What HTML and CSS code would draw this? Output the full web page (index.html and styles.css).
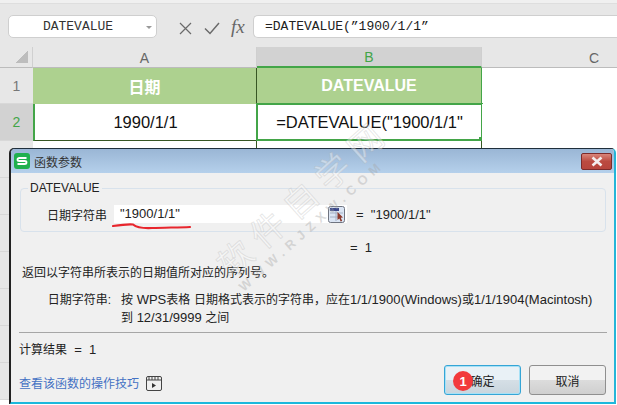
FILE: index.html
```html
<!DOCTYPE html>
<html lang="zh">
<head>
<meta charset="utf-8">
<title>DATEVALUE</title>
<link rel="stylesheet" href="styles.css">
</head>
<body>
<div class="app">
  <div class="formula-row">
    <div class="namebox"><span class="namebox-text">DATEVALUE</span><span class="caret"></span></div>
    <div class="fx-tools">
      <svg width="13" height="13" viewBox="0 0 13 13"><path d="M1 1 L12 12 M12 1 L1 12" stroke="#6a6a6a" stroke-width="1.2" fill="none"/></svg>
      <svg width="16" height="13" viewBox="0 0 16 13"><path d="M1 6.5 L6 11.5 L15 1" stroke="#6a6a6a" stroke-width="1.5" fill="none"/></svg>
      <span class="fx">fx</span>
    </div>
    <div class="formula-input">=DATEVALUE(”1900/1/1”</div>
  </div>
  <div class="sheet">
    <div class="corner"><span class="corner-mark"></span></div>
    <div class="col-head">A</div>
    <div class="col-head active">B</div>
    <div class="col-head col-c">C</div>

    <div class="row-head">1</div>
    <div class="cell title">日期</div>
    <div class="cell title title-b">DATEVALUE</div>
    <div class="cell blank"></div>

    <div class="row-head active">2</div>
    <div class="cell body">1990/1/1</div>
    <div class="cell body selected">=DATEVALUE("1900/1/1"<span class="handle"></span></div>
    <div class="cell blank"></div>

    <div class="row-head"></div>
    <div class="cell body"></div>
    <div class="cell body"></div>
    <div class="cell blank"></div>

    <div class="row-head"></div>
    <div class="row-head"></div>
    <div class="row-head"></div>
    <div class="row-head"></div>
    <div class="row-head"></div>
    <div class="row-head"></div>
  </div>
</div>

<div class="dialog">
  <div class="titlebar">
    <svg class="logo" width="16" height="16" viewBox="0 0 16 16"><rect width="16" height="16" rx="3" fill="#20b04e"/><path d="M12.5 5 H5.5 Q3.5 5 3.5 6.7 Q3.5 8 5.5 8 H10.5 Q12.5 8 12.5 9.4 Q12.5 11 10.5 11 H3.5" stroke="#fff" stroke-width="1.8" fill="none"/></svg>
    <span class="title-text">函数参数</span>
    <span class="close"><svg width="16" height="11" viewBox="0 0 16 11"><path d="M3.5 1.5 L12.5 9.5 M12.5 1.5 L3.5 9.5" stroke="#f4eeee" stroke-width="2.6" fill="none"/></svg></span>
  </div>
  <div class="dialog-body">
    <fieldset class="group">
      <legend>DATEVALUE</legend>
      <div class="arg-row">
        <span class="arg-label">日期字符串</span>
        <span class="arg-input">"1900/1/1"</span>
        <span class="ref-btn">
          <svg width="17" height="17" viewBox="0 0 17 17">
            <rect x="0.5" y="0.5" width="16" height="16" rx="2" fill="#dbe5f4" stroke="#6f7480"/>
            <rect x="2" y="2" width="9" height="3" fill="#3c4a8c"/>
            <path d="M2 7 H15 M2 11 H10 M8 5 V15" stroke="#a5b0c4" fill="none"/>
            <path d="M9.5 6 L15 11.5 L12.8 11.8 L14.2 15 L12.6 15.5 L11.4 12.6 L9.5 14 Z" fill="#8c3a2c"/>
          </svg>
        </span>
        <span class="arg-value">=&nbsp;&nbsp;"1900/1/1"</span>
      </div>
    </fieldset>
    <div class="result-inline">=&nbsp;&nbsp;1</div>
    <p class="desc">返回以字符串所表示的日期值所对应的序列号。</p>
    <div class="help">
      <span class="help-label">日期字符串:</span>
      <span class="help-text"><span class="cjk">按</span> WPS<span class="cjk">表格</span> <span class="cjk">日期格式表示的字符串，应在</span>1/1/1900(Windows)<span class="cjk">或</span>1/1/1904(Macintosh)<br><span class="cjk">到</span> 12/31/9999 <span class="cjk">之间</span></span>
    </div>
    <div class="rule"></div>
    <div class="calc"><span class="cjk">计算结果</span>&nbsp;&nbsp;=&nbsp;&nbsp;1</div>
    <div class="footer">
      <span class="link">查看该函数的操作技巧</span>
      <svg class="video" width="16" height="15" viewBox="0 0 16 15"><rect x="0.5" y="0.5" width="15" height="14" rx="1.5" fill="none" stroke="#444"/><path d="M1 4 H15" stroke="#444"/><path d="M3 1 V4 M6 1 V4 M9 1 V4 M12 1 V4" stroke="#444"/><path d="M6 7 L10 9.5 L6 12 Z" fill="#333"/></svg>
      <span class="btn primary">确定</span>
      <span class="btn">取消</span>
    </div>
  </div>
  <span class="badge">1</span>
</div>

<svg class="underline" width="82" height="12" viewBox="0 0 82 12"><path d="M1 4 C8 3 16 2 21 2.5 C24 5 30 6.5 40 6 C52 5.5 66 5.5 78 5" stroke="#e8262d" stroke-width="2.2" fill="none" stroke-linecap="round"/></svg>

<div class="watermark"><span class="wm-big">软件自学网</span><span class="wm-small">WWW.RJZXW.COM</span></div>
</body>
</html>
```

FILE: styles.css
```css
* { box-sizing: border-box; }
html, body { margin: 0; padding: 0; }
body {
  width: 617px; height: 405px; overflow: hidden; position: relative;
  background: #fff;
  font-family: "Liberation Sans", "Noto Sans CJK SC", sans-serif;
  color: #222;
}
.app { display: flex; flex-direction: column; height: 405px; overflow: hidden; }
.formula-row {
  height: 47px; flex: none;
  background: #e7e7e7;
  border-top: 3px solid #f0f0f0;
  box-shadow: inset 0 1px 0 #dedede;
  display: flex; align-items: flex-start;
  padding: 12px 0 0 8px;
}
.namebox {
  width: 149px; height: 23px;
  background: #fff; border: 1px solid #cfcfcf; border-radius: 5px;
  display: flex; align-items: center; justify-content: center;
  position: relative;
  font: 13px "Liberation Mono", monospace; color: #333;
}
.namebox-text { margin-right: 9px; }
.caret {
  position: absolute; right: 4px; top: 10px;
  border-left: 3px solid transparent; border-right: 3px solid transparent;
  border-top: 3px solid #999;
}
.fx-tools { width: 96px; flex: none; display: flex; align-items: center; padding: 3px 0 0 22px; height: 23px; gap: 12px; }
.fx { font: italic 19px "Liberation Serif", serif; color: #666; line-height: 16px; margin-left: -1px; margin-top: -3px; }
.formula-input {
  flex: 1; height: 23px;
  background: #fff; border: 1px solid #cfcfcf; border-right: 0;
  border-radius: 5px 0 0 5px;
  padding-left: 11px;
  font: 13px/22px "Liberation Mono", monospace; color: #222;
  white-space: nowrap;
}
.sheet {
  display: grid;
  grid-template-columns: 33px 224px 225px 224px;
  grid-template-rows: 21px 36px 37px 37px;
  grid-auto-rows: 37px;
  flex: none;
}
.corner { background: #e7e7e7; border-bottom: 1px solid #bcbcbc; border-right: 1px solid #d0d0d0; position: relative; }
.corner-mark {
  position: absolute; right: 4px; bottom: 4px; width: 12px; height: 12px;
  background: linear-gradient(135deg, transparent 50%, #bdbdbd 50%);
}
.col-head {
  background: #e7e7e7; border-bottom: 1px solid #bcbcbc; border-right: 1px solid #cfcfcf;
  display: flex; align-items: center; justify-content: center;
  font-size: 14px; color: #666; padding-top: 1px;
}
.col-head.active { background: #d2d2d2; color: #43a548; border-bottom: 2px solid #43a548; }
.col-c { border-right: 0; }
.row-head {
  grid-column: 1;
  background: #e7e7e7; border-bottom: 1px solid #d8d8d8;
  display: flex; align-items: center; justify-content: center;
  font-size: 14px; color: #777;
}
.row-head.active { background: #d2d2d2; color: #43a548; }
.cell { display: flex; align-items: center; justify-content: center; position: relative; }
.title {
  background: #add18f; color: #fff; font-weight: bold; font-size: 16px;
  border-right: 1px solid #375623;
}
.title-b { border-right: 1px solid #43a548; }
.body {
  background: #fff; font-size: 16.5px; color: #111;
  border-right: 1px solid #375623; border-bottom: 1px solid #375623;
}
.row-head.active + .body { border-left: 2px solid #43a548; }
.selected { border: 2px solid #43a548; margin: -1px -1px 0 -1px; height: 38px; white-space: nowrap; }
.handle {
  position: absolute; right: -3px; bottom: -3px; width: 5px; height: 5px;
  background: #43a548;
}
.blank { background: #fff; }

.dialog {
  position: absolute; left: 10px; top: 148px; width: 606px; height: 256px;
  background: #f0f0f0;
  border: 1px solid #1f2f3c;
  border-bottom: 2px solid #1cb8dc;
  border-right: 2px solid #25b5d8;
  border-left: 1px solid #222;
  box-shadow: -1px 0 0 #222;
  border-radius: 5px 5px 0 0;
  display: flex; flex-direction: column;
}
.titlebar {
  height: 24px; flex: none;
  background: linear-gradient(#9ab6d5, #b5d0eb);
  display: flex; align-items: center;
  padding: 0 2px 0 3px;
  border-radius: 4px 4px 0 0;
}
.logo { margin-right: 4px; flex: none; }
.title-text { font-size: 12px; color: #333; flex: 1; }
.close {
  width: 31px; height: 17px;
  background: linear-gradient(#d9857a, #bb4a40 50%, #b7453c);
  border: 1px solid #7c2b2b; border-radius: 2px;
  display: flex; align-items: center; justify-content: center;
}
.dialog-body {
  flex: 1; min-height: 0; padding: 0 8px;
  display: flex; flex-direction: column;
  font-size: 12px; color: #222;
}
.group {
  margin: 8px 0 0 1px; padding: 0; height: 51px; width: 586px; flex: none;
  border: 1px solid #d8e2ec; border-radius: 4px;
}
.group legend { font-size: 12px; padding: 0 2px; margin-left: 7px; line-height: 14px; color: #222; }
.arg-row { display: flex; align-items: center; height: 18px; margin-top: 10px; }
.arg-label { width: 86px; text-align: right; flex: none; }
.arg-input {
  width: 214px; height: 18px; margin-left: 7px; background: #fff; flex: none;
  font-size: 13px; line-height: 17px; padding-left: 6px;
}
.ref-btn { width: 19px; height: 18px; background: #fff; display: flex; align-items: center; flex: none; }
.arg-value { margin-left: 9px; font-size: 13px; }
.result-inline { height: 17px; margin: 7px 0 0 331px; flex: none; line-height: 17px; font-size: 13px; }
.desc { margin: 8px 0 0; height: 18px; line-height: 18px; padding-left: 3px; flex: none; }
.help { display: flex; margin-top: 9px; flex: none; line-height: 18px; }
.help-label { width: 92px; text-align: right; flex: none; }
.help-text { margin-left: 10px; white-space: nowrap; font-size: 13px; }
.cjk { font-size: 12px; }
.rule { height: 1px; background: #a6a6a6; margin: 5px 0 0; width: 588px; flex: none; }
.calc { margin-top: 8px; line-height: 18px; flex: none; font-size: 13px; }
.footer { display: flex; align-items: flex-start; margin-top: 6px; flex: none; height: 30px; }
.link { color: #4472c4; font-size: 12px; margin-top: 9px; }
.video { margin: 11px 0 0 7px; }
.btn {
  width: 77px; height: 30px; border-radius: 3px;
  border: 1px solid #8f8f8f;
  background: linear-gradient(#f2f2f2 50%, #dcdcdc 50%, #cfcfcf);
  display: flex; align-items: center; justify-content: center;
  font-size: 12px; color: #222;
  margin-left: 8px;
}
.btn.primary {
  margin-left: auto;
  border: 1px solid #35a5d6;
  box-shadow: inset 0 0 0 1px #a7e1f6;
  background: linear-gradient(#e9f1f6 50%, #d5dfe6 50%, #c9d5dd);
}
.badge {
  position: absolute; left: 442px; top: 222px;
  width: 20px; height: 20px; border-radius: 50%;
  background: #f23a3c; color: #fff; font-size: 13px; font-weight: bold;
  display: flex; align-items: center; justify-content: center;
}
.underline { position: absolute; left: 112px; top: 222px; }
.watermark {
  position: absolute; left: 166px; top: 181px; width: 280px; height: 52px;
  transform: rotate(-41.7deg);
  display: flex; flex-direction: column; align-items: center;
  pointer-events: none;
}
.wm-big {
  white-space: nowrap;
  color: rgba(255, 255, 255, 0.4);
  -webkit-text-stroke: 1px rgba(170, 170, 170, 0.28);
  font-size: 34px; letter-spacing: 9.5px; line-height: 36px; padding-left: 9.5px;
}
.wm-small {
  white-space: nowrap;
  color: rgba(165, 165, 165, 0.38);
  font-size: 13px; font-weight: bold; letter-spacing: 5.5px; line-height: 16px; margin-right: 16px;
}
```
